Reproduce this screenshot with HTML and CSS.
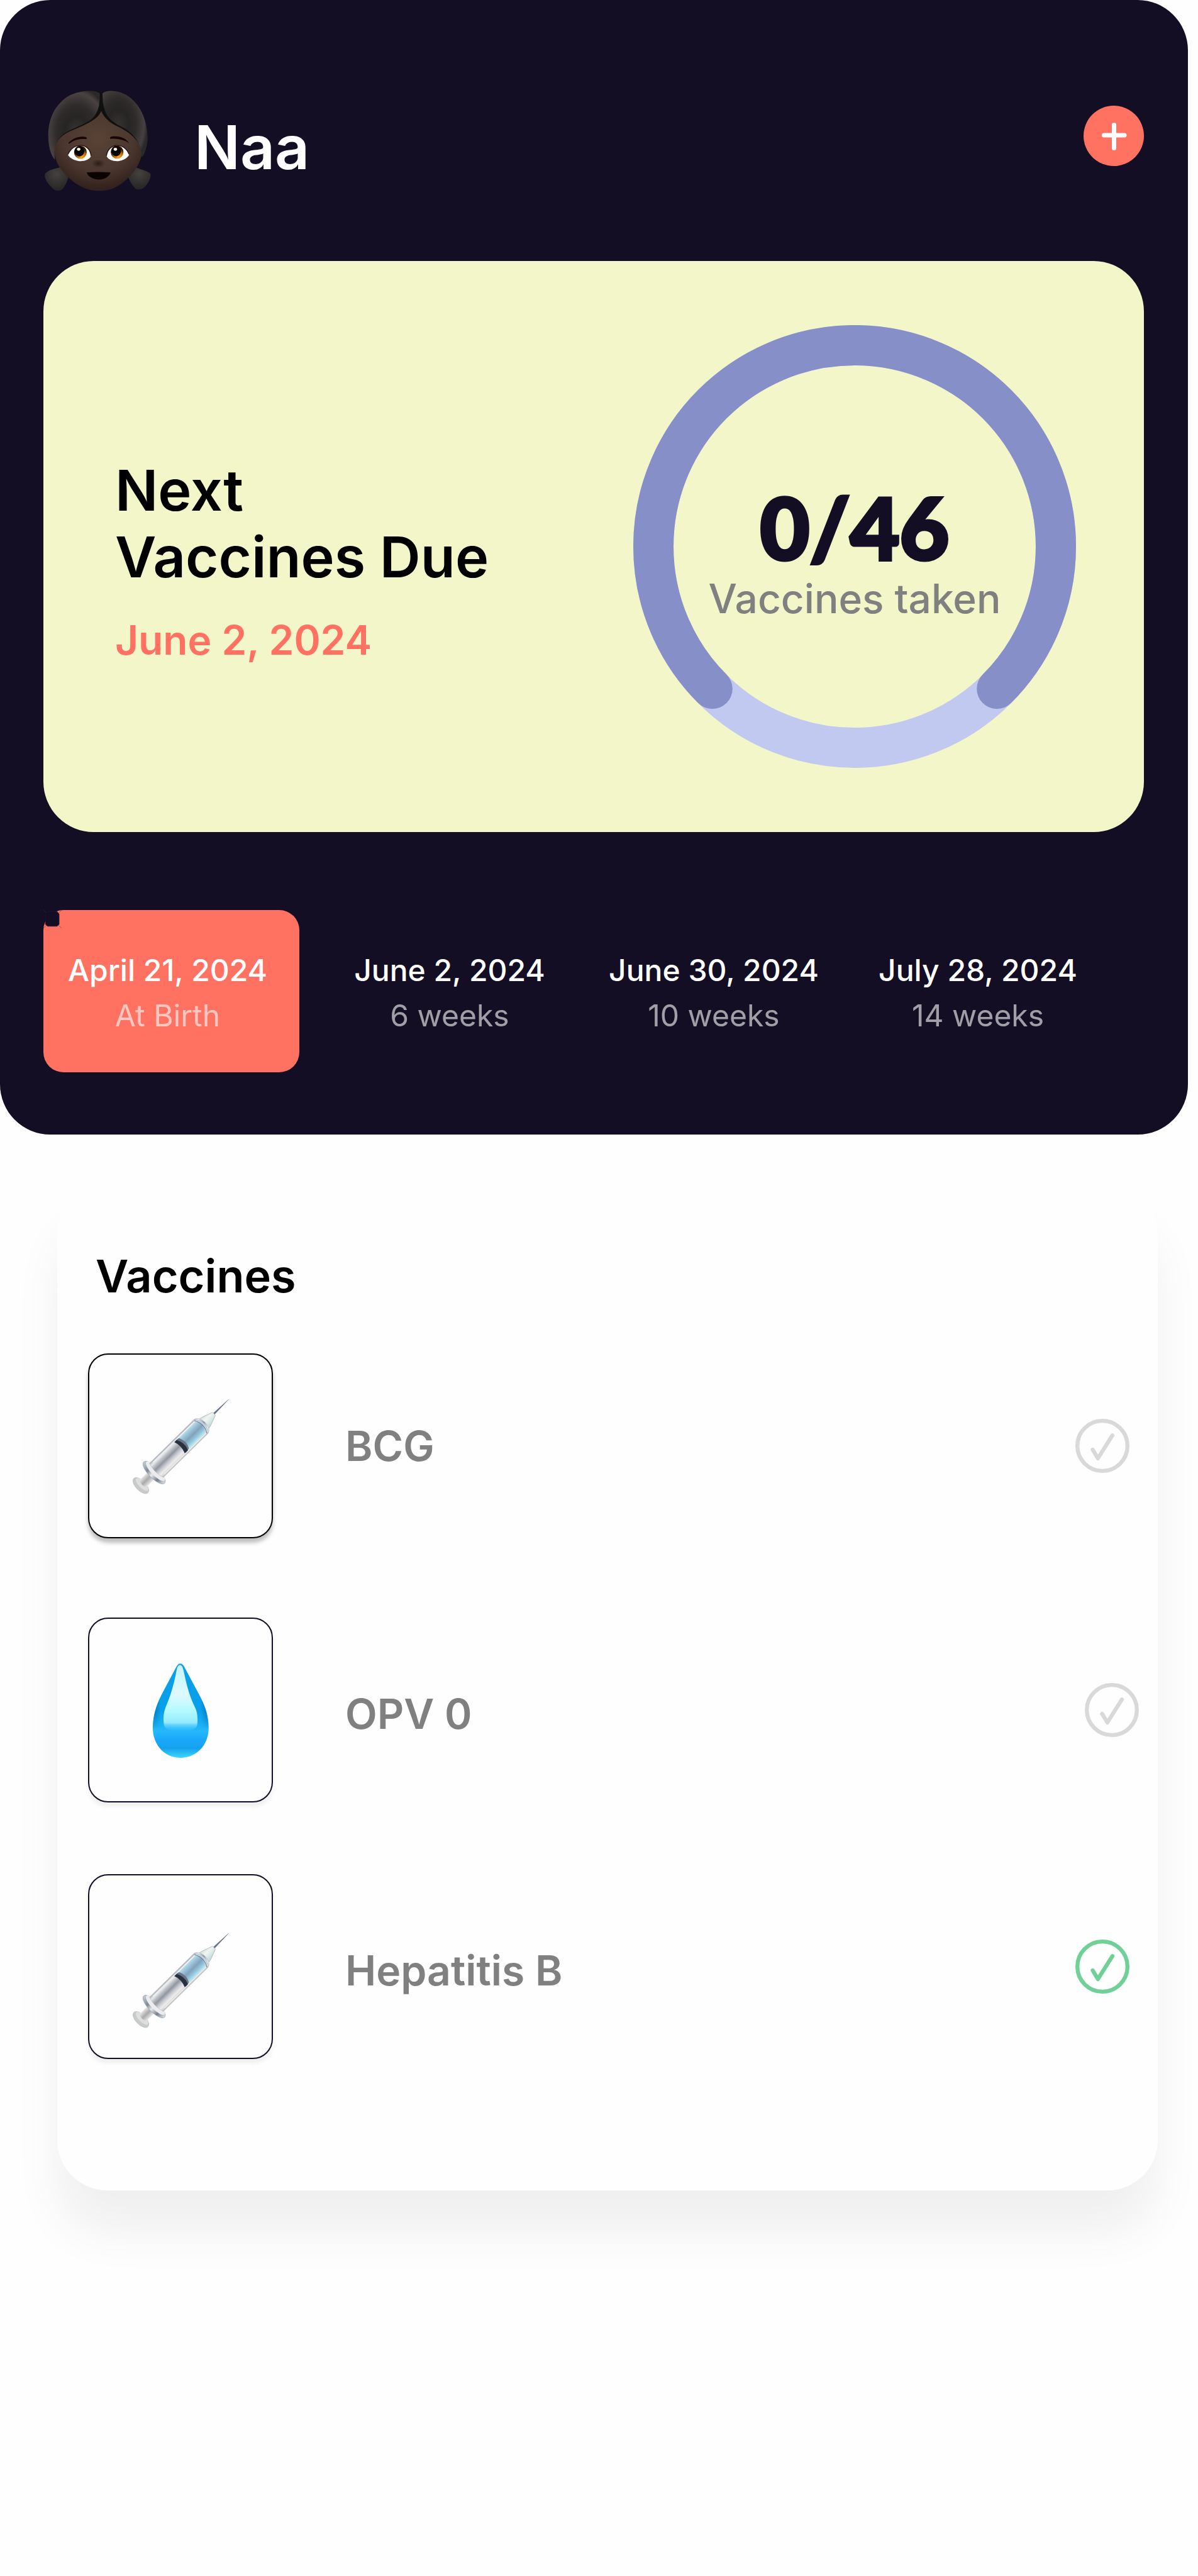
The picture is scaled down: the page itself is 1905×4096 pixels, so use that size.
FILE: index.html
```html
<!DOCTYPE html>
<html lang="en">
<head>
<meta charset="utf-8">
<meta name="viewport" content="width=device-width, initial-scale=1">
<title>Naa – Vaccines</title>
<link rel="stylesheet" href="styles.css">
</head>
<body>
<svg class="defs" width="0" height="0" aria-hidden="true">
  <defs>
    <linearGradient id="barrel" x1="0" y1="0" x2="0" y2="1">
      <stop offset="0" stop-color="#a9aeb4"/><stop offset=".14" stop-color="#e9ebee"/>
      <stop offset=".26" stop-color="#c3c6cc"/><stop offset=".45" stop-color="#92969f"/>
      <stop offset=".62" stop-color="#c6c8d0"/><stop offset=".8" stop-color="#ececf0"/>
      <stop offset=".92" stop-color="#dcd8d4"/><stop offset="1" stop-color="#b4babf"/>
    </linearGradient>
    <linearGradient id="fluid" x1="0" y1="0" x2="0" y2="1">
      <stop offset="0" stop-color="#b9dcec"/><stop offset=".2" stop-color="#9cc4da"/>
      <stop offset=".5" stop-color="#7fa3ba"/><stop offset=".78" stop-color="#98c6dc"/>
      <stop offset="1" stop-color="#b4ecf6"/>
    </linearGradient>
    <linearGradient id="rod" x1="0" y1="0" x2="0" y2="1">
      <stop offset="0" stop-color="#e6e6e6"/><stop offset=".5" stop-color="#a9a9a9"/>
      <stop offset="1" stop-color="#e4e4e4"/>
    </linearGradient>
    <linearGradient id="flange" x1="0" y1="0" x2="0" y2="1">
      <stop offset="0" stop-color="#c9ced2"/><stop offset=".3" stop-color="#7f8a96"/>
      <stop offset=".5" stop-color="#e8ebee"/><stop offset=".75" stop-color="#74808c"/>
      <stop offset="1" stop-color="#dfe2e4"/>
    </linearGradient>
    <linearGradient id="hub" x1="0" y1="0" x2="0" y2="1">
      <stop offset="0" stop-color="#d3dbd9"/><stop offset=".35" stop-color="#f1f6f4"/>
      <stop offset="1" stop-color="#bcd8d8"/>
    </linearGradient>
    <symbol id="syringe" viewBox="300 341 590 580">
      <g transform="translate(355 868) rotate(-44.5)">
        <path d="M612-6 L737-1 L737 1 L612 6Z" fill="#647487"/>
        <path d="M520-40 Q545-38 552-34 L604-16 Q614-15 615-8 L615 8 Q614 15 604 16 L552 36 Q540 40 520 42Z" fill="url(#hub)" stroke="#a4b3b5" stroke-width="3"/>
        <ellipse cx="2" cy="0" rx="30" ry="60" fill="#c9cbcb" stroke="#b6c0c3" stroke-width="3"/>
        <ellipse cx="12" cy="0" rx="20" ry="49" fill="#dededd"/>
        <path d="M18-29 L112-29 L112 29 L18 29 Q4 0 18-29Z" fill="url(#rod)"/>
        <ellipse cx="113" cy="0" rx="33" ry="89" fill="url(#flange)" stroke="#9ba9b3" stroke-width="3"/>
        <ellipse cx="125" cy="0" rx="26" ry="78" fill="#ececee"/>
        <path d="M132-59 L508-59 Q530-52 536-28 Q546 4 534 34 Q526 56 506 59 L132 59 Q112 0 132-59Z" fill="url(#barrel)" stroke="#b5bbc0" stroke-width="2"/>
        <path d="M350-44 L502-44 Q528 0 502 45 L350 45 Q370 0 350-44Z" fill="url(#fluid)"/>
        <path d="M326-46 Q340-52 352-46 Q374 0 352 46 Q338 52 324 46 Q344 0 326-46Z" fill="#27313f"/>
        <path d="M345-44 Q357-48 364-40 Q384 0 364 40 Q358 46 352 44 Q370 0 345-44Z" fill="#6c7487"/>
        <path d="M502-52 Q534 0 502 54" fill="none" stroke="#747c84" stroke-width="4"/>
        <path d="M514-46 Q538 0 516 46" fill="none" stroke="#bcd3e8" stroke-width="10"/>
        <path d="M150-48 L500-48" stroke="#f6f8f8" stroke-width="5"/>
        <path d="M150 50 L500 50" stroke="#f3eee8" stroke-width="5"/>
      </g>
    </symbol>
    <symbol id="tick" viewBox="0 0 108 108">
      <circle cx="54" cy="54" r="50" fill="none" stroke="currentColor" stroke-width="8"/>
      <path d="M34.500 61.500 L45 79 L74 33" fill="none" stroke="currentColor" stroke-width="8" stroke-linecap="round" stroke-linejoin="round"/>
    </symbol>
  </defs>
</svg>

<main class="page">
  <section class="panel">
    <header class="profile">
      <svg class="avatar" viewBox="75 88 553 602" preserveAspectRatio="none" role="img" aria-label="Girl">
        <defs>
          <radialGradient id="face" cx=".5" cy=".35" r=".62">
            <stop offset="0" stop-color="#594336"/><stop offset=".65" stop-color="#4b372f"/><stop offset="1" stop-color="#33221d"/>
          </radialGradient>
          <radialGradient id="hairL" cx=".55" cy=".6" r=".65">
            <stop offset="0" stop-color="#3a3434"/><stop offset=".35" stop-color="#272523"/><stop offset=".6" stop-color="#2e2b2a"/><stop offset=".88" stop-color="#4a4242"/><stop offset="1" stop-color="#2b2829"/>
          </radialGradient>
          <radialGradient id="hairR" cx=".35" cy=".5" r=".65">
            <stop offset="0" stop-color="#363131"/><stop offset=".35" stop-color="#272523"/><stop offset=".6" stop-color="#2e2b2a"/><stop offset=".88" stop-color="#474040"/><stop offset="1" stop-color="#2b2829"/>
          </radialGradient>
          <radialGradient id="bun" cx=".5" cy=".3" r=".7">
            <stop offset="0" stop-color="#45413f"/><stop offset="1" stop-color="#262424"/>
          </radialGradient>
          <radialGradient id="iris" cx=".6" cy=".85" r=".6">
            <stop offset="0" stop-color="#f9a71c"/><stop offset=".6" stop-color="#b8690a"/><stop offset="1" stop-color="#2e1602"/>
          </radialGradient>
          <radialGradient id="nose"><stop offset="0" stop-color="#2b1c17"/><stop offset="1" stop-color="#2b1c17" stop-opacity="0"/></radialGradient>
        </defs>
        <path d="M165 545 C120 555 85 570 78 585 C70 605 85 640 118 675 C135 692 160 690 170 675 C185 655 195 625 200 600Z" fill="url(#bun)"/>
        <path d="M545 545 C585 565 620 572 626 587 C630 610 612 650 590 670 C572 684 552 684 543 670 C528 650 518 630 508 600Z" fill="url(#bun)"/>
        <path d="M368 102 C400 80 475 84 525 135 C590 200 608 290 611 370 C610 430 590 490 568 520 L150 530 C110 480 92 420 94 340 C98 250 130 170 200 120 C260 84 345 80 368 102Z" fill="#111010"/>
        <path d="M369 210 C385 250 410 280 460 305 C530 345 580 400 580 470 C570 540 520 605 475 645 C430 680 400 688 360 688 C310 688 270 670 230 638 C180 595 130 530 126 460 C126 400 150 365 200 335 C290 290 350 265 369 210Z" fill="url(#face)"/>
        <path d="M362 104 C340 82 260 84 200 120 C130 170 98 250 94 340 C92 410 104 470 128 502 C122 440 130 390 170 350 C220 310 280 295 320 258 C360 215 362 160 362 104Z" fill="url(#hairL)"/>
        <path d="M376 104 C400 80 475 84 525 135 C590 200 608 290 611 370 C609 420 598 462 580 490 C582 430 560 370 500 320 C450 290 415 270 395 225 C378 185 376 140 376 104Z" fill="url(#hairR)"/>
        <path d="M198 402 C220 375 255 358 290 366 Q298 372 292 379 C255 375 230 383 203 406Z M417 377 C412 368 420 363 430 362 C470 358 500 376 514 402 C490 385 460 373 417 377Z" fill="#160504"/>
        <path d="M196 472 C215 425 245 415 270 417 C300 425 317 455 315 482 C305 505 275 512 255 510 C225 505 205 492 196 472Z" fill="#fff"/>
        <path d="M515 472 C498 425 468 415 445 417 C415 425 397 455 398 482 C408 505 438 512 458 510 C488 505 505 492 515 472Z" fill="#fff"/>
        <path d="M196 470 C215 425 245 413 270 416 C300 424 315 450 316 478 M515 470 C498 425 468 413 445 416 C415 424 399 450 397 478" fill="none" stroke="#2b1110" stroke-width="5"/>
        <ellipse cx="261" cy="457" rx="33" ry="39" fill="url(#iris)"/>
        <ellipse cx="452" cy="456" rx="33" ry="39" fill="url(#iris)"/>
        <ellipse cx="256" cy="451" rx="25" ry="31" fill="#050302"/>
        <ellipse cx="447" cy="450" rx="25" ry="31" fill="#050302"/>
        <circle cx="252" cy="439" r="9" fill="#fff6e0"/>
        <circle cx="443" cy="439" r="9" fill="#fff6e0"/>
        <ellipse cx="354" cy="524" rx="36" ry="26" fill="url(#nose)"/>
        <path d="M294 578 Q356 572 418 578 C414 600 388 620 358 620 C325 620 298 600 294 578Z" fill="#0b0202"/>
      </svg>
      <h1 class="name">Naa</h1>
      <button class="add" type="button" aria-label="Add">
        <svg viewBox="0 0 96 96" aria-hidden="true"><path d="M48.500 30.500V67.500M32.500 47H65" stroke="#fff" stroke-width="7" stroke-linecap="round"/></svg>
      </button>
    </header>

    <section class="summary">
      <div class="due">
        <h2 class="due-title">Next<br>Vaccines Due</h2>
        <p class="due-date">June 2, 2024</p>
      </div>
      <div class="progress">
        <svg class="ring" viewBox="0 0 880 880" aria-hidden="true">
          <circle cx="440" cy="440" r="400" fill="none" stroke="#c2c9f0" stroke-width="80"/>
          <path d="M157.200 722.800 A400 400 0 1 1 722.800 722.800" fill="none" stroke="#868fc7" stroke-width="80" stroke-linecap="round"/>
        </svg>
        <div class="tally">
          <p class="count">0/46</p>
          <p class="count-label">Vaccines taken</p>
        </div>
      </div>
    </section>

    <nav class="dates" aria-label="Schedule">
      <button class="date date-active" type="button" aria-current="date">
        <svg class="marker" viewBox="0 0 36 36" aria-hidden="true">
          <path d="M0 0L36 36M36 0L0 36" stroke="#4a2a66" stroke-width="1" opacity=".6"/>
          <path d="M8 3H27L31 8V28L27 32H8L4 28V8Z" fill="#130e24" stroke="#24123f" stroke-width="1"/>
        </svg>
        <span class="day">April 21, 2024</span>
        <span class="age">At Birth</span>
      </button>
      <button class="date" type="button"><span class="day">June 2, 2024</span><span class="age">6 weeks</span></button>
      <button class="date" type="button"><span class="day">June 30, 2024</span><span class="age">10 weeks</span></button>
      <button class="date" type="button"><span class="day">July 28, 2024</span><span class="age">14 weeks</span></button>
    </nav>
  </section>

  <section class="vaccines">
    <h2 class="vaccines-title">Vaccines</h2>
    <ul class="list">
      <li class="row row-first">
        <span class="tile tile-raised"><svg class="syringe" aria-hidden="true"><use href="#syringe"/></svg></span>
        <label class="vaccine" for="bcg">BCG</label>
        <span class="check"><input type="checkbox" id="bcg"><svg aria-hidden="true"><use href="#tick"/></svg></span>
      </li>
      <li class="row row-second">
        <span class="tile">
          <svg class="drop" viewBox="424 358 340 570" aria-hidden="true">
            <defs>
              <linearGradient id="dropBody" x1="0" y1="0" x2="0" y2="1">
                <stop offset="0" stop-color="#0b9fe6"/><stop offset=".5" stop-color="#08a0ea"/><stop offset=".72" stop-color="#25b8fb"/>
                <stop offset=".82" stop-color="#18a6fa"/><stop offset=".9" stop-color="#15a2ec"/><stop offset="1" stop-color="#3fd8ff"/>
              </linearGradient>
              <linearGradient id="dropEdge" x1="0" y1="0" x2="1" y2="0">
                <stop offset="0" stop-color="#0560a0" stop-opacity=".75"/><stop offset=".14" stop-color="#0560a0" stop-opacity="0"/>
                <stop offset=".86" stop-color="#0560a0" stop-opacity="0"/><stop offset="1" stop-color="#0560a0" stop-opacity=".75"/>
              </linearGradient>
              <linearGradient id="edgeFade" x1="0" y1="0" x2="0" y2="1">
                <stop offset="0" stop-color="#fff"/><stop offset=".7" stop-color="#fff"/><stop offset="1" stop-color="#000"/>
              </linearGradient>
              <mask id="edgeMask" maskUnits="userSpaceOnUse" x="424" y="362" width="340" height="400">
                <rect x="424" y="362" width="340" height="400" fill="url(#edgeFade)"/>
              </mask>
              <linearGradient id="dropShine" x1="0" y1="0" x2="0" y2="1">
                <stop offset="0" stop-color="#c6f5ff"/><stop offset=".45" stop-color="#dcfaff"/><stop offset=".7" stop-color="#b4faff"/>
                <stop offset=".88" stop-color="#96eaff"/><stop offset="1" stop-color="#4accff" stop-opacity=".2"/>
              </linearGradient>
            </defs>
            <path d="M590 366 C600 366 608 372 616 388 L700 545 C735 610 760 670 760 750 C760 850 690 928 594 928 C496 928 427 850 427 750 C427 670 450 610 480 550 L566 388 C574 372 582 366 590 366Z" fill="url(#dropBody)"/>
            <path d="M590 366 C600 366 608 372 616 388 L700 545 C735 610 757 670 760 750 L427 750 C430 670 450 610 480 550 L566 388 C574 372 582 366 590 366Z" fill="url(#dropEdge)" mask="url(#edgeMask)"/>
            <path d="M590 375 C600 375 606 388 611 410 C630 500 645 560 680 630 C694 660 696 700 692 735 Q680 764 640 764 L540 764 Q505 764 494 735 C488 700 490 660 504 625 C535 555 555 480 570 400 C574 384 580 375 590 375Z" fill="url(#dropShine)"/>
          </svg>
        </span>
        <label class="vaccine vaccine-low" for="opv">OPV 0</label>
        <span class="check check-outer"><input type="checkbox" id="opv"><svg aria-hidden="true"><use href="#tick"/></svg></span>
      </li>
      <li class="row">
        <span class="tile tile-low"><svg class="syringe" aria-hidden="true"><use href="#syringe"/></svg></span>
        <label class="vaccine vaccine-low" for="hepb">Hepatitis B</label>
        <span class="check"><input type="checkbox" id="hepb" checked><svg aria-hidden="true"><use href="#tick"/></svg></span>
      </li>
    </ul>
  </section>
</main>
</body>
</html>
```
FILE: styles.css
```css
* { box-sizing: border-box; }

body {
  margin: 0;
  background: #fefefe;
  color: #000;
  font-family: "Inter", "Open Sans", sans-serif;
  font-weight: 500;
}

h1, h2, p, ul { margin: 0; padding: 0; font-weight: 600; }
ul { list-style: none; }
button { border: 0; padding: 0; background: none; color: inherit; font: inherit; cursor: pointer; }
.defs { position: absolute; }
.page { min-height: 100vh; }

/* Dark panel */
.panel {
  margin-right: 16px;
  padding: 144px 70px 99px 69px;
  border-radius: 80px;
  background: #130e24;
  color: #fff;
}

.profile { display: flex; align-items: center; }
.avatar { width: 169px; height: 160px; margin-left: 2px; }
.name { flex: 1; margin-left: 69px; padding-top: 20px; font-size: 96px; line-height: 108px; }
.add { align-self: flex-start; width: 96px; height: 96px; margin-top: 24px; border-radius: 50%; background: #ff7262; }
.add svg { display: block; width: 100%; }

/* Summary card */
.summary {
  display: flex;
  align-items: center;
  justify-content: space-between;
  margin-top: 111px;
  padding: 102px 108px 102px 114px;
  border-radius: 80px;
  background: #f2f6c9;
  color: #000;
}
.due { padding-top: 46px; }
.due-title { font-size: 90px; line-height: 106px; }
.due-date { margin-top: 39px; color: #ff7262; font-size: 64px; line-height: 80px; }

.progress { display: grid; place-items: center; }
.ring, .tally { grid-area: 1 / 1; }
.ring { width: 704px; height: 704px; }
.tally { padding-top: 16px; text-align: center; }
/* The outline rounds off the corners of the digits. */
.count {
  color: #130e24;
  font-family: "Lato", "Open Sans", sans-serif;
  font-size: 136px;
  font-weight: 900;
  line-height: 144px;
  -webkit-text-stroke: 5px #130e24;
  stroke-linejoin: round;
}
.count-label { margin-top: 6px; color: #808080; font-size: 64px; font-weight: 500; line-height: 72px; }

/* Schedule */
.dates { display: grid; grid-template-columns: 436fr 420fr 420fr 420fr 54fr; margin-top: 124px; }
.date { display: flex; flex-direction: column; align-items: center; height: 258px; padding-top: 60px; }
.date-active { position: relative; margin-right: 29px; padding-right: 12px; border-radius: 32px; background: #ff7262; }
.day { font-size: 48px; line-height: 72px; white-space: nowrap; }
.age { font-size: 48px; font-weight: 400; line-height: 72px; opacity: .6; }
.marker { position: absolute; top: 0; left: 0; width: 29px; height: 29px; }

/* Vaccine list */
.vaccines {
  margin: 79px 64px 0 91px;
  padding: 102px 45px 209px 49px;
  border-radius: 80px;
  background: #fefefe;
  box-shadow: 0 68px 76px rgba(0, 0, 0, .06);
}
.vaccines-title { margin: 0 0 79px 12px; font-size: 72px; line-height: 88px; }
.row { display: flex; align-items: center; }
.row-first { margin-bottom: 126px; }
.row-second { margin-bottom: 114px; }

.tile {
  display: flex;
  align-items: center;
  justify-content: center;
  width: 294px;
  height: 294px;
  border: 2px solid #130e24;
  border-radius: 32px;
  background: #fefefe;
  box-shadow: 0 7px 6px rgba(0, 0, 0, .06);
}
.tile-raised { border-color: #000; box-shadow: 0 7px 6px rgba(0, 0, 0, .25); }
.tile-low { padding-top: 42px; }
.syringe { width: 157px; height: 155px; }
.drop { width: 91px; height: 152px; }

.vaccine { flex: 1; margin-left: 115px; color: #808080; font-size: 66px; font-weight: 600; line-height: 80px; }
.vaccine-low { padding-top: 12px; }

.check { position: relative; width: 86px; height: 86px; color: #d9d9d9; }
.check svg { display: block; width: 100%; height: 100%; }
.check input { position: absolute; inset: 0; width: 100%; height: 100%; margin: 0; opacity: 0; cursor: pointer; }
.check input:checked + svg { color: #70d097; }
.check-outer { margin-right: -15px; }
```
